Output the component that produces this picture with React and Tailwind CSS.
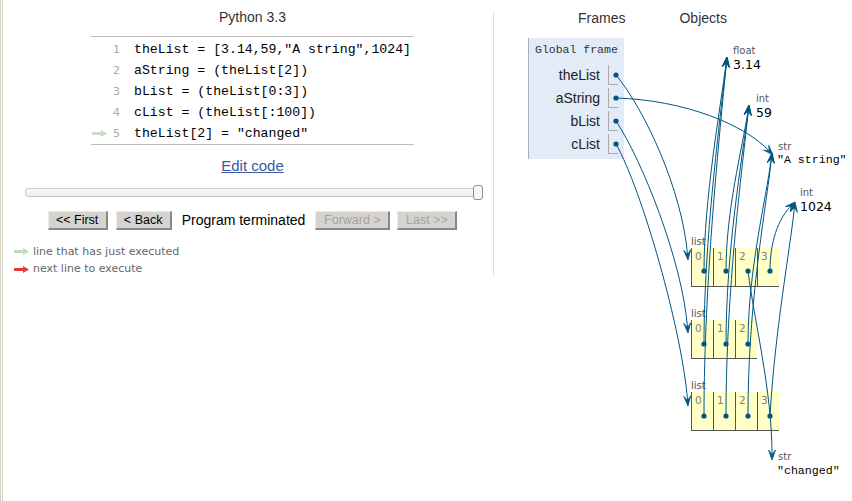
import React from "react";

const C = "#005583";

const connectors = [
  [616, 75, 645, 110, 682, 190, 688, 260],
  [616, 98, 685, 100, 745, 125, 773, 155],
  [616, 121, 642, 160, 682, 260, 688, 333],
  [616, 144, 642, 190, 682, 330, 688, 406],
  [704, 271, 704, 200, 720, 110, 727, 57],
  [704, 344, 704, 240, 720, 120, 727, 57],
  [704, 416, 704, 280, 720, 130, 727, 57],
  [726, 271, 726, 210, 742, 150, 749, 105],
  [726, 344, 726, 250, 742, 160, 749, 105],
  [726, 416, 726, 290, 742, 170, 749, 105],
  [748, 344, 748, 270, 766, 200, 772, 153],
  [748, 416, 748, 300, 766, 210, 772, 153],
  [748, 271, 754, 320, 772, 390, 772, 460],
  [770, 271, 770, 235, 782, 215, 795, 202],
  [770, 416, 775, 330, 790, 250, 795, 202],
];

const dots = [
  [616, 75], [616, 98], [616, 121], [616, 144],
  [704, 271], [726, 271], [748, 271], [770, 271],
  [704, 344], [726, 344], [748, 344],
  [704, 416], [726, 416], [748, 416], [770, 416],
];

function Connector({ p }) {
  const [x0, y0, x1, y1, x2, y2, x3, y3] = p;
  const dx = x3 - x2;
  const dy = y3 - y2;
  const len = Math.hypot(dx, dy) || 1;
  const ux = dx / len;
  const uy = dy / len;
  const nx = -uy;
  const ny = ux;
  const L = 10;
  const W = 7;
  const f = 0.55;
  const bx = x3 - ux * L;
  const by = y3 - uy * L;
  const fx = x3 - ux * L * f;
  const fy = y3 - uy * L * f;
  const head = `M${x3},${y3} L${bx + (nx * W) / 2},${by + (ny * W) / 2} L${fx},${fy} L${bx - (nx * W) / 2},${by - (ny * W) / 2} Z`;
  return (
    <g>
      <path d={`M${x0},${y0} C${x1},${y1} ${x2},${y2} ${fx},${fy}`} fill="none" stroke={C} strokeWidth="1" />
      <path d={head} fill={C} stroke={C} strokeWidth="0.8" strokeLinejoin="round" />
    </g>
  );
}

function SmallArrow({ color }) {
  return (
    <svg width="15" height="7" viewBox="0 0 15 7" className="block">
      <path d="M0 2 H9 V0 L15 3.5 L9 7 V5 H0 Z" fill={color} />
    </svg>
  );
}

const code = [
  'theList = [3.14,59,"A string",1024]',
  "aString = (theList[2])",
  "bList = (theList[0:3])",
  "cList = (theList[:100])",
  'theList[2] = "changed"',
];

function Btn({ children, disabled, w }) {
  return (
    <div
      className={`${w} h-[19px] flex items-center justify-center bg-[#d6d3ce] border-t border-l border-r-2 border-b-2 border-t-[#ecebe6] border-l-[#ecebe6] border-r-[#888888] border-b-[#888888] text-[12.5px] leading-none ${
        disabled ? "text-[#a3a3a3]" : "text-black"
      }`}
    >
      {children}
    </div>
  );
}

function Cells({ n }) {
  return (
    <div className="flex">
      {Array.from({ length: n }).map((_, i) => (
        <div
          key={i}
          className="w-[22px] h-[39px] border-l border-b border-[#555555] bg-[#ffffc6] pl-[3px] pt-[2px] text-[10.5px] leading-[12px] text-[#808080] font-['DejaVu_Sans',sans-serif]"
        >
          {i}
        </div>
      ))}
    </div>
  );
}

const label = "text-[10px] leading-[12px] text-[#555555] font-['DejaVu_Sans',sans-serif]";
const numVal = "text-[12.5px] leading-[14px] text-black font-['DejaVu_Sans',sans-serif]";
const strVal = "text-[11.6px] leading-[13px] text-black font-['Liberation_Mono',monospace] whitespace-pre";

export default function App() {
  return (
    <div className="relative w-[852px] h-[501px] bg-white overflow-hidden flex font-['Liberation_Sans',Arial,sans-serif]">
      <div className="w-[3px] h-[501px] border-l border-r border-[#d3cfc3] shrink-0" />

      {/* left panel */}
      <div className="w-[490px] shrink-0 pl-[9px] pt-[9px] flex flex-col">
        <div className="text-center text-[14px] leading-[16px] text-[#333333]">Python 3.3</div>

        <div className="mt-[11px] mx-auto w-[323px] border-t border-b border-[#bdbdbd] pt-[3px]">
          {code.map((c, i) => (
            <div key={i} className="flex h-[20.8px] items-center">
              <div className="w-[16px] flex justify-end">
                {i === 4 && <SmallArrow color="#c4e0c4" />}
              </div>
              <div className="w-[13px] text-right text-[11px] leading-[14px] text-[#aaaaaa] font-['DejaVu_Sans',sans-serif]">
                {i + 1}
              </div>
              <div className="pl-[14px] text-[13.2px] leading-[16px] text-black font-['Liberation_Mono',monospace] whitespace-pre">
                {c}
              </div>
            </div>
          ))}
        </div>

        <div className="mt-[12px] h-[18px] leading-[18px] text-center">
          <span className="text-[15px] text-[#3d58a2] underline">Edit code</span>
        </div>

        <div className="mt-[11px] ml-[13px] w-[458px] h-[14px] flex items-center">
          <div className="flex-1 h-[9px] rounded-l-[3px] border border-[#c8c8c8] bg-gradient-to-b from-[#fafafa] to-[#ececec]" />
          <div className="w-[10px] h-[15px] -ml-[1px] rounded-[3px] border border-[#8f8f8f] bg-[#f7f7f7]" />
        </div>

        <div className="mt-[11px] flex justify-center items-center">
          <Btn w="w-[60px]">&lt;&lt; First</Btn>
          <div className="ml-[8px]">
            <Btn w="w-[56px]">&lt; Back</Btn>
          </div>
          <div className="ml-[10px] text-[14px] leading-[19px] text-black">Program terminated</div>
          <div className="ml-[10px]">
            <Btn w="w-[75px]" disabled>
              Forward &gt;
            </Btn>
          </div>
          <div className="ml-[7px]">
            <Btn w="w-[60px]" disabled>
              Last &gt;&gt;
            </Btn>
          </div>
        </div>

        <div className="mt-[13px] ml-[2px] text-[11px] text-[#666666] font-['DejaVu_Sans',sans-serif]">
          <div className="h-[18px] flex items-center">
            <SmallArrow color="#bcdcbc" />
            <span className="ml-[4px]">line that has just executed</span>
          </div>
          <div className="h-[17px] flex items-center">
            <SmallArrow color="#e23b3b" />
            <span className="ml-[4px]">next line to execute</span>
          </div>
        </div>
      </div>

      <div className="w-px bg-[#dddddd] mt-[12px] h-[264px] shrink-0" />

      {/* right panel */}
      <div className="relative flex-1">
        <div className="flex pt-[10px] text-[14px] leading-[16px] text-[#333333]">
          <div className="ml-[84px]">Frames</div>
          <div className="ml-[54px]">Objects</div>
        </div>

        <div className="mt-[12px] ml-[34px] w-[96px] bg-[#e2ebf6] border-l border-[#a6b3b6] pl-[6px] pr-[6px] pt-[2px] pb-[5px]">
          <div className="h-[20px] leading-[20px] text-[11.5px] text-[#333333] font-['Liberation_Mono',monospace] whitespace-pre">
            Global frame
          </div>
          <div className="mt-[5px] flex flex-col gap-[3px]">
            {["theList", "aString", "bList", "cList"].map((n) => (
              <div key={n} className="flex h-[20px]">
                <div className="flex-1 text-right pr-[8px] text-[14px] leading-[20px] text-[#222222]">{n}</div>
                <div className="w-[10px] h-[20px] border-l border-b border-[#aaaaaa]" />
              </div>
            ))}
          </div>
        </div>

        {/* heap objects */}
        <div className="absolute left-[239px] top-[45px] flex flex-col">
          <div className={label}>float</div>
          <div className={`${numVal} mt-[1px]`}>3.14</div>
        </div>
        <div className="absolute left-[262px] top-[93px] flex flex-col">
          <div className={label}>int</div>
          <div className={`${numVal} mt-[1px]`}>59</div>
        </div>
        <div className="absolute left-[283px] top-[141px] flex flex-col">
          <div className={`${label} ml-[1px]`}>str</div>
          <div className={strVal}>"A string"</div>
        </div>
        <div className="absolute left-[306px] top-[187px] flex flex-col">
          <div className={label}>int</div>
          <div className={`${numVal} mt-[1px]`}>1024</div>
        </div>
        <div className="absolute left-[283px] top-[451px] flex flex-col">
          <div className={`${label} ml-[1px]`}>str</div>
          <div className={`${strVal} mt-[1px]`}>"changed"</div>
        </div>

        <div className="absolute left-[197px] top-[236px] flex flex-col">
          <div className={label}>list</div>
          <Cells n={4} />
        </div>
        <div className="absolute left-[197px] top-[308px] flex flex-col">
          <div className={label}>list</div>
          <Cells n={3} />
        </div>
        <div className="absolute left-[197px] top-[380px] flex flex-col">
          <div className={label}>list</div>
          <Cells n={4} />
        </div>
      </div>

      <svg className="absolute left-0 top-0 pointer-events-none" width="852" height="501">
        {connectors.map((p, i) => (
          <Connector key={i} p={p} />
        ))}
        {dots.map(([x, y], i) => (
          <circle key={i} cx={x} cy={y} r="2.6" fill={C} />
        ))}
      </svg>
    </div>
  );
}
